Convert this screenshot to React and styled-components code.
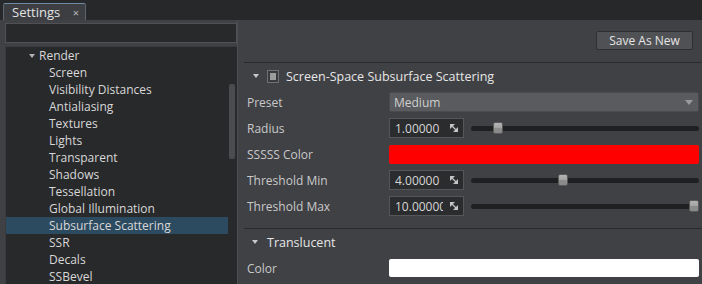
import React from "react";
import styled, { createGlobalStyle } from "styled-components";

const GlobalStyle = createGlobalStyle`
  html, body { margin: 0; padding: 0; background: #404145; }
  body { font-family: "Open Sans", "Liberation Sans", sans-serif; font-size: 12px; }
`;

const treeItems = [
  "Screen",
  "Visibility Distances",
  "Antialiasing",
  "Textures",
  "Lights",
  "Transparent",
  "Shadows",
  "Tessellation",
  "Global Illumination",
  "Subsurface Scattering",
  "SSR",
  "Decals",
  "SSBevel"
];

const Window = styled.div`
  width: 702px;
  height: 284px;
  display: flex;
  flex-direction: column;
  background: #404145;
  overflow: hidden;
  color: #d2d2d2;
`;

const TabBar = styled.div`
  height: 20px;
  background: #27282a;
  display: flex;
  align-items: flex-end;
  padding-left: 3px;
  box-sizing: border-box;
`;

const Tab = styled.div`
  width: 83px;
  height: 17px;
  box-sizing: border-box;
  background: #3d3e42;
  border: 1px solid #5d6670;
  border-top-color: #6e8aa6;
  border-bottom: none;
  border-radius: 2px 2px 0 0;
  display: flex;
  align-items: center;
  justify-content: space-between;
  padding: 0 6px 0 8px;
  font-size: 13px;
  color: #e2e2e2;
`;

const TabClose = styled.span`
  font-size: 11px;
  color: #bbb;
`;

const Body = styled.div`
  flex: 1;
  display: flex;
  min-height: 0;
`;

const LeftCol = styled.div`
  width: 238px;
  box-sizing: border-box;
  padding: 3px 0 0 5px;
  display: flex;
  flex-direction: column;
  gap: 3px;
  border-right: 1px solid #4d4e52;
`;

const Search = styled.div`
  height: 20px;
  box-sizing: border-box;
  background: #28292b;
  border: 1px solid #505155;
`;

const TreeBox = styled.div`
  flex: 1;
  display: flex;
  background: #28292b;
  border: 1px solid #3a3b3e;
  border-bottom: none;
  border-right: none;
  min-height: 0;
`;

const TreeList = styled.div`
  flex: 1;
  display: flex;
  flex-direction: column;
`;

const TreeRow = styled.div`
  height: 17px;
  flex-shrink: 0;
  display: flex;
  align-items: center;
  padding-left: ${p => p.$indent}px;
  background: ${p => (p.$selected ? "#2c4a60" : "transparent")};
  color: #d8d8d8;
  white-space: nowrap;
`;

const Caret = styled.span`
  width: 0;
  height: 0;
  border-left: 3.5px solid transparent;
  border-right: 3.5px solid transparent;
  border-top: 4px solid ${p => p.$color || "#b0b0b0"};
  margin-right: ${p => p.$gap}px;
`;

const ScrollTrack = styled.div`
  width: 9px;
  padding: 37px 2px 0 1px;
  box-sizing: border-box;
`;

const ScrollThumb = styled.div`
  height: 75px;
  background: #4b4c50;
  border-radius: 2px;
`;

const RightCol = styled.div`
  flex: 1;
  display: flex;
  flex-direction: column;
  padding-left: 6px;
`;

const Toolbar = styled.div`
  height: 42px;
  box-sizing: border-box;
  display: flex;
  justify-content: flex-end;
  padding: 11px 9px 0 0;
`;

const Button = styled.div`
  width: 97px;
  height: 19px;
  box-sizing: border-box;
  background: #505155;
  border: 1px solid #2e2f32;
  border-radius: 2px;
  display: flex;
  align-items: center;
  justify-content: center;
  color: #e4e4e4;
  font-size: 12px;
`;

const Separator = styled.div`
  height: 1px;
  background: #2a2b2e;
`;

const Section = styled.div`
  display: flex;
  flex-direction: column;
  padding-bottom: ${p => p.$pad || 0}px;
`;

const Header = styled.div`
  height: 26px;
  display: flex;
  align-items: center;
  padding-left: ${p => p.$indent}px;
  color: #e6e6e6;
  font-size: 12.5px;
`;

const Check = styled.span`
  width: 12px;
  height: 13px;
  box-sizing: border-box;
  border: 1px solid #707175;
  background: #3a3b3f;
  display: flex;
  align-items: center;
  justify-content: center;
  margin-right: 7px;

  &::after {
    content: "";
    width: 6px;
    height: 7px;
    background: #9c9c9c;
  }
`;

const Row = styled.div`
  height: 26px;
  display: grid;
  grid-template-columns: 145px 1fr;
  align-items: center;
  padding-right: 3px;
`;

const Label = styled.span`
  padding-left: 3px;
  color: #c9c9c9;
`;

const Combo = styled.div`
  height: 20px;
  box-sizing: border-box;
  background: #5a5b5f;
  border: 1px solid #4a4b4f;
  border-radius: 2px;
  display: flex;
  align-items: center;
  justify-content: space-between;
  padding: 0 5px 0 4px;
  color: #cfcfcf;
`;

const Swatch = styled.div`
  height: ${p => p.$h || 19}px;
  background: ${p => p.$color};
  border-radius: 2px;
`;

const SliderWrap = styled.div`
  display: flex;
  align-items: center;
  gap: 7px;
`;

const NumBox = styled.div`
  width: 75px;
  height: 20px;
  box-sizing: border-box;
  background: #2b2c2e;
  border: 1px solid #55565a;
  display: flex;
  align-items: center;
  padding-left: 5px;
  color: #d6d6d6;
`;

const NumText = styled.span`
  width: 48px;
  margin-right: 6px;
  overflow: hidden;
  white-space: nowrap;
`;

const Track = styled.div`
  flex: 1;
  height: 5px;
  background: #1f2022;
  border-radius: 3px;
  display: flex;
  align-items: center;
`;

const Thumb = styled.div`
  width: 10px;
  height: 12px;
  flex-shrink: 0;
  box-sizing: border-box;
  border-radius: 2px;
  background: linear-gradient(#b4b4b4 0%, #a2a2a2 50%, #8c8c8c 51%, #8a8a8a 100%);
  border: 1px solid #5a5a5a;
`;

const Spacer = styled.div`
  flex-shrink: 0;
`;

const DragIcon = () => (
  <svg width="10" height="10" viewBox="0 0 10 10">
    <polygon points="1,1 6,1 1,6" fill="#c4c4c4" />
    <polygon points="9,9 9,4 4,9" fill="#c4c4c4" />
    <line x1="2" y1="2" x2="8" y2="8" stroke="#c4c4c4" strokeWidth="1.2" />
  </svg>
);

const ComboArrow = () => (
  <svg width="8" height="5" viewBox="0 0 8 5">
    <polygon points="0,0 8,0 4,5" fill="#9a9a9a" />
  </svg>
);

const Slider = ({ value, min, max }) => {
  const frac = (value - min) / (max - min);
  return (
    <SliderWrap>
      <NumBox>
        <NumText>{value.toFixed(5)}</NumText>
        <DragIcon />
      </NumBox>
      <Track>
        <Spacer style={{ flexGrow: frac }} />
        <Thumb />
        <Spacer style={{ flexGrow: 1 - frac }} />
      </Track>
    </SliderWrap>
  );
};

export default function App() {
  return (
    <Window>
      <GlobalStyle />
      <TabBar>
        <Tab>
          <span>Settings</span>
          <TabClose>×</TabClose>
        </Tab>
      </TabBar>
      <Body>
        <LeftCol>
          <Search />
          <TreeBox>
            <TreeList>
              <TreeRow $indent={23}>
                <Caret $gap={4} />
                Render
              </TreeRow>
              {treeItems.map(item => (
                <TreeRow key={item} $indent={43} $selected={item === "Subsurface Scattering"}>
                  {item}
                </TreeRow>
              ))}
            </TreeList>
            <ScrollTrack>
              <ScrollThumb />
            </ScrollTrack>
          </TreeBox>
        </LeftCol>
        <RightCol>
          <Toolbar>
            <Button>Save As New</Button>
          </Toolbar>
          <Separator />
          <Section $pad={9}>
            <Header $indent={9}>
              <Caret $gap={8} $color="#c8c8c8" />
              <Check />
              Screen-Space Subsurface Scattering
            </Header>
            <Row>
              <Label>Preset</Label>
              <Combo>
                <span>Medium</span>
                <ComboArrow />
              </Combo>
            </Row>
            <Row>
              <Label>Radius</Label>
              <Slider value={1} min={0} max={10} />
            </Row>
            <Row>
              <Label>SSSSS Color</Label>
              <Swatch $color="#ff0000" />
            </Row>
            <Row>
              <Label>Threshold Min</Label>
              <Slider value={4} min={0} max={10} />
            </Row>
            <Row>
              <Label>Threshold Max</Label>
              <Slider value={10} min={0} max={10} />
            </Row>
          </Section>
          <Separator />
          <Section>
            <Header $indent={8}>
              <Caret $gap={9} $color="#c8c8c8" />
              Translucent
            </Header>
            <Row>
              <Label>Color</Label>
              <Swatch $color="#ffffff" $h={18} />
            </Row>
          </Section>
        </RightCol>
      </Body>
    </Window>
  );
}
